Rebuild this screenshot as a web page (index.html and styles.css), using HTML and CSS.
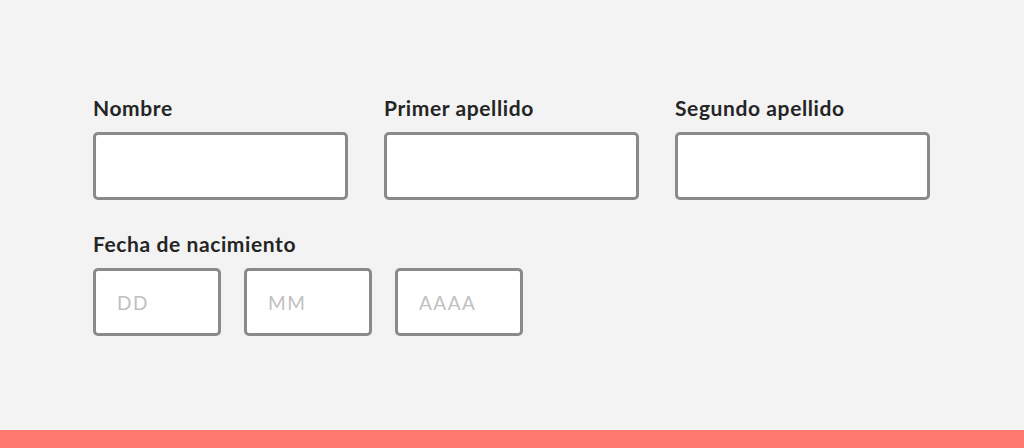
FILE: index.html
```html
<!DOCTYPE html>
<html lang="es">
<head>
<meta charset="utf-8">
<title>Formulario</title>
<link rel="stylesheet" href="styles.css">
</head>
<body>
<div class="page">
  <form class="form">
    <div class="row row-names">
      <div class="field">
        <label class="label" for="nombre">Nombre</label>
        <input class="input" id="nombre" type="text">
      </div>
      <div class="field">
        <label class="label" for="ap1">Primer apellido</label>
        <input class="input" id="ap1" type="text">
      </div>
      <div class="field">
        <label class="label" for="ap2">Segundo apellido</label>
        <input class="input" id="ap2" type="text">
      </div>
    </div>
    <div class="field field-date">
      <span class="label">Fecha de nacimiento</span>
      <div class="row row-date">
        <input class="input input-date" type="text" placeholder="DD">
        <input class="input input-date" type="text" placeholder="MM">
        <input class="input input-date" type="text" placeholder="AAAA">
      </div>
    </div>
  </form>
  <div class="bar"></div>
</div>
</body>
</html>
```
FILE: styles.css
```css
* { box-sizing: border-box; }
html, body { margin: 0; padding: 0; }
body {
  background: #f3f3f3;
  font-family: "Lato", "Noto Sans", sans-serif;
  color: #222;
}
.page {
  height: 448px;
  display: flex;
  flex-direction: column;
}
.form {
  flex: 1;
  padding: 94px 0 0 93px;
  display: flex;
  flex-direction: column;
  gap: 30px;
}
.row { display: flex; }
.row-names { gap: 36px; }
.row-date { gap: 23px; }
.field { display: flex; flex-direction: column; gap: 10px; }
.label {
  font-size: 21px;
  font-weight: 700;
  line-height: 28px;
  letter-spacing: 0.6px;
  color: #252525;
}
.input {
  width: 255px;
  height: 68px;
  background: #fff;
  border: 3px solid #8a8a8a;
  border-radius: 5px;
  padding: 0 21px;
  font-family: inherit;
  font-size: 19px;
  letter-spacing: 1.5px;
  color: #333;
  outline: none;
}
.input-date { width: 128px; }
.input::placeholder { color: #c0c0c0; }
.bar {
  height: 18px;
  background: #fd786e;
}
```
